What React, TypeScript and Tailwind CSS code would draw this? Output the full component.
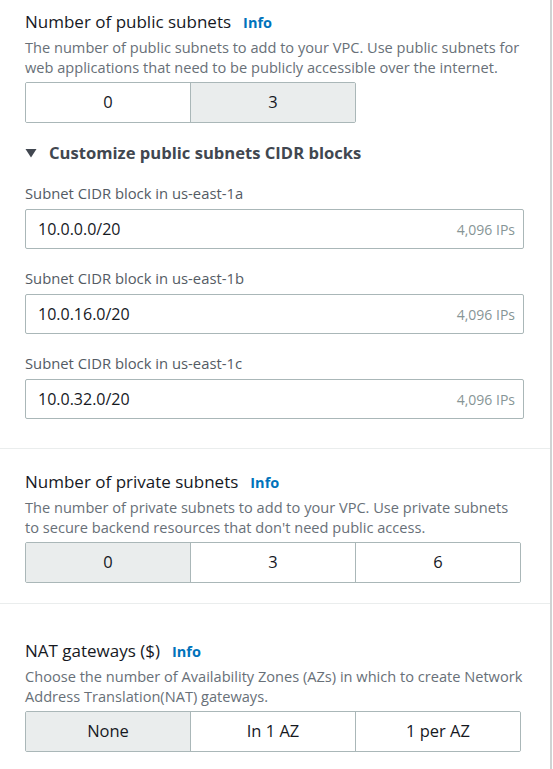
import React from "react";

const FONT = { fontFamily: '"Open Sans", "Noto Sans", sans-serif' };

function Title({ text }: { text: string }) {
  return (
    <div className="flex items-baseline gap-[12px] leading-[22px]">
      <span className="text-[17px] text-[#16191f]">{text}</span>
      <span className="text-[14.5px] font-bold text-[#0073bb]">Info</span>
    </div>
  );
}

function Desc({ children }: { children: React.ReactNode }) {
  return <p className="mt-[3px] text-[14.6px] leading-[20px] text-[#687078]">{children}</p>;
}

function Segmented({ options, selected, cols }: { options: string[]; selected: number; cols: number }) {
  return (
    <div className="mt-[5px] w-[496px]">
      <div
        className={
          "flex h-[41px] rounded-[2px] border border-[#aab7b8] overflow-hidden " +
          (cols === 2 ? "w-[331px]" : "w-[496px]")
        }
      >
        {options.map((o, i) => (
          <div
            key={o}
            className={
              "flex flex-1 items-center justify-center text-[16.5px] text-[#16191f] " +
              (i > 0 ? "border-l border-[#aab7b8] " : "") +
              (i === selected ? "bg-[#eaeded]" : "bg-white")
            }
          >
            {o}
          </div>
        ))}
      </div>
    </div>
  );
}

function CidrField({ label, value, mt }: { label: string; value: string; mt: string }) {
  return (
    <div className={mt}>
      <div className="text-[14.8px] leading-[22px] text-[#545b64]">{label}</div>
      <div className="mt-[5px] flex h-[40px] w-[499px] items-center justify-between rounded-[2px] border border-[#aab7b8] bg-white pl-[12px] pr-[8px]">
        <span className="text-[16px] text-[#16191f]">{value}</span>
        <span className="text-[14px] text-[#879596]">4,096 IPs</span>
      </div>
    </div>
  );
}

export default function App() {
  return (
    <div style={FONT} className="min-h-[769px] w-[553px] bg-white">
      <div className="min-h-[769px] w-[552px] border-r-2 border-[#cfd3d3]">
        {/* Public subnets */}
        <div className="px-[25px] pt-[11px] pb-[29px]">
          <Title text="Number of public subnets" />
          <Desc>
            The number of public subnets to add to your VPC. Use public subnets for
            <br />
            web applications that need to be publicly accessible over the internet.
          </Desc>
          <Segmented options={["0", "3"]} selected={1} cols={2} />

          <div className="mt-[19px] flex items-center gap-[12px] leading-[22px]">
            <svg width="12" height="10" viewBox="0 0 12 10" className="shrink-0">
              <path d="M0.5 1 L11.5 1 L6 9.5 Z" fill="#414750" />
            </svg>
            <span className="text-[16.6px] font-bold text-[#414750]">Customize public subnets CIDR blocks</span>
          </div>

          <CidrField label="Subnet CIDR block in us-east-1a" value="10.0.0.0/20" mt="mt-[18px]" />
          <CidrField label="Subnet CIDR block in us-east-1b" value="10.0.16.0/20" mt="mt-[18px]" />
          <CidrField label="Subnet CIDR block in us-east-1c" value="10.0.32.0/20" mt="mt-[18px]" />
        </div>

        <div className="h-px w-[550px] bg-[#eaeded]" />

        {/* Private subnets */}
        <div className="px-[25px] pt-[22px] pb-[20px]">
          <Title text="Number of private subnets" />
          <Desc>
            The number of private subnets to add to your VPC. Use private subnets
            <br />
            to secure backend resources that don't need public access.
          </Desc>
          <Segmented options={["0", "3", "6"]} selected={0} cols={3} />
        </div>

        <div className="h-px w-[550px] bg-[#eaeded]" />

        {/* NAT gateways */}
        <div className="px-[25px] pt-[36px] pb-[16px]">
          <Title text="NAT gateways ($)" />
          <Desc>
            Choose the number of Availability Zones (AZs) in which to create Network
            <br />
            Address Translation(NAT) gateways.
          </Desc>
          <Segmented options={["None", "In 1 AZ", "1 per AZ"]} selected={0} cols={3} />
        </div>
      </div>
    </div>
  );
}
